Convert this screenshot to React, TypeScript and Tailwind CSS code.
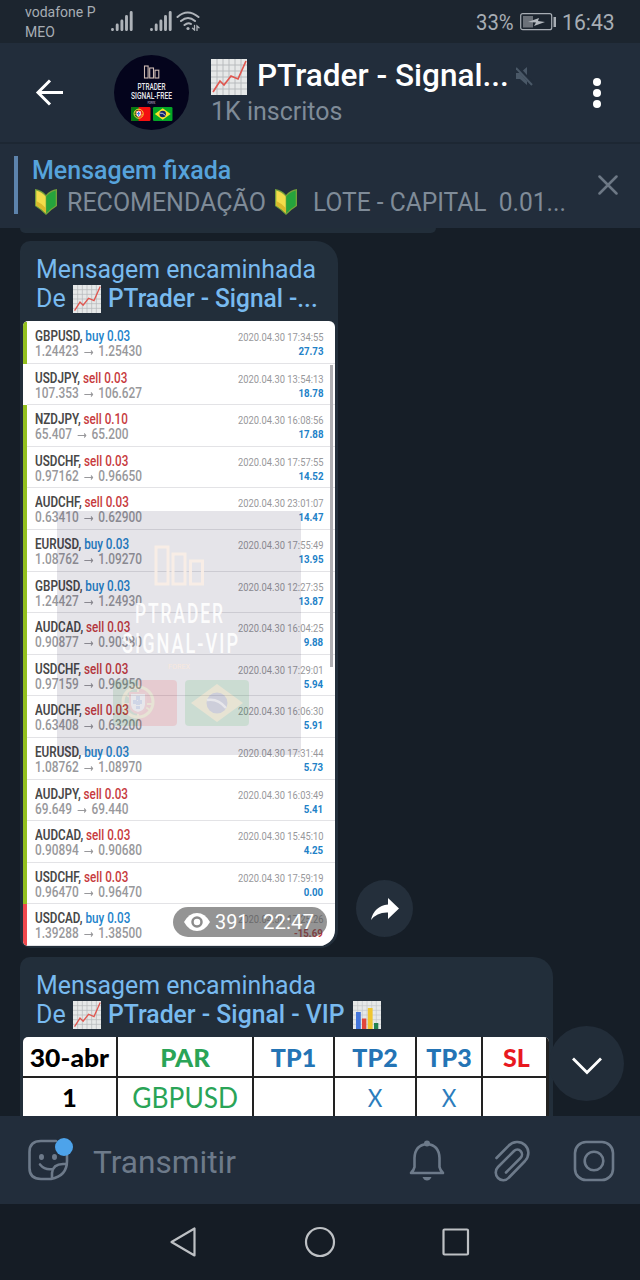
import React from "react";

type Trade = [string, "buy" | "sell", string, string, string, string, string, "g" | "w" | "r"];

const trades: Trade[] = [
  ["GBPUSD", "buy", "0.03", "1.24423", "1.25430", "2020.04.30 17:34:55", "27.73", "g"],
  ["USDJPY", "sell", "0.03", "107.353", "106.627", "2020.04.30 13:54:13", "18.78", "w"],
  ["NZDJPY", "sell", "0.10", "65.407", "65.200", "2020.04.30 16:08:56", "17.88", "g"],
  ["USDCHF", "sell", "0.03", "0.97162", "0.96650", "2020.04.30 17:57:55", "14.52", "g"],
  ["AUDCHF", "sell", "0.03", "0.63410", "0.62900", "2020.04.30 23:01:07", "14.47", "g"],
  ["EURUSD", "buy", "0.03", "1.08762", "1.09270", "2020.04.30 17:55:49", "13.95", "g"],
  ["GBPUSD", "buy", "0.03", "1.24427", "1.24930", "2020.04.30 12:27:35", "13.87", "g"],
  ["AUDCAD", "sell", "0.03", "0.90877", "0.90380", "2020.04.30 16:04:25", "9.88", "g"],
  ["USDCHF", "sell", "0.03", "0.97159", "0.96950", "2020.04.30 17:29:01", "5.94", "g"],
  ["AUDCHF", "sell", "0.03", "0.63408", "0.63200", "2020.04.30 16:06:30", "5.91", "g"],
  ["EURUSD", "buy", "0.03", "1.08762", "1.08970", "2020.04.30 17:31:44", "5.73", "g"],
  ["AUDJPY", "sell", "0.03", "69.649", "69.440", "2020.04.30 16:03:49", "5.41", "g"],
  ["AUDCAD", "sell", "0.03", "0.90894", "0.90680", "2020.04.30 15:45:10", "4.25", "g"],
  ["USDCHF", "sell", "0.03", "0.96470", "0.96470", "2020.04.30 17:59:19", "0.00", "g"],
  ["USDCAD", "buy", "0.03", "1.39288", "1.38500", "2020.04.30 17:25:26", "-15.69", "r"],
];

const barColor = { g: "bg-[#93c01f]", w: "bg-white", r: "bg-[#f0484d]" };

function ChartUp({ className }: { className: string }) {
  return (
    <svg viewBox="0 0 36 36" className={className}>
      <rect width="36" height="36" fill="#e6e8e8" />
      <path d="M6 0V36M12 0V36M18 0V36M24 0V36M30 0V36M0 6H36M0 12H36M0 18H36M0 24H36M0 30H36" stroke="#b4b8ba" strokeWidth=".9" />
      <path d="M2 33L9 22L13 26L20 17L27 20L35 2" fill="none" stroke="#e0564f" strokeWidth="1.7" />
    </svg>
  );
}

function ChartBars({ className }: { className: string }) {
  return (
    <svg viewBox="0 0 28 28" className={className}>
      <rect width="28" height="28" fill="#e6e8e8" />
      <path d="M4.7 0V28M9.3 0V28M14 0V28M18.7 0V28M23.3 0V28M0 4.7H28M0 9.3H28M0 14H28M0 18.7H28M0 23.3H28" stroke="#c3c6c8" strokeWidth=".7" />
      <rect x="3" y="11" width="4.8" height="17" fill="#4476dc" />
      <rect x="9" y="17.5" width="4.3" height="10.5" fill="#e1463a" />
      <rect x="14.8" y="7" width="4.8" height="21" fill="#efc52e" />
      <rect x="21" y="22" width="4.3" height="6" fill="#238150" />
    </svg>
  );
}

function Leaf({ className }: { className: string }) {
  return (
    <svg viewBox="0 0 22 27" className={className}>
      <path d="M0 1Q7 2 11 7Q15 2 22 1V18Q17 21 11 27Q5 21 0 18Z" fill="#74a13a" />
      <path d="M1.3 2.6Q7 4 10.7 8.6V25Q6 20 1.3 17.4Z" fill="#f2dc4a" />
      <path d="M20.7 2.6Q15 4 11.3 8.6V25Q16 20 20.7 17.4Z" fill="#25a43c" />
      <path d="M1.3 13Q6 15 10.7 20V25Q6 20 1.3 17.4Z" fill="#d9b92c" />
    </svg>
  );
}

function Flags() {
  return (
    <>
      <rect x="0" y="0" width="64" height="46" rx="4" fill="#f41010" />
      <path d="M4 0H25V46H4Q0 46 0 42V4Q0 0 4 0Z" fill="#067a12" />
      <circle cx="25" cy="22" r="15" fill="none" stroke="#f7e13a" strokeWidth="3" />
      <path d="M12 14L37 30M11 24H40M25 7V37" stroke="#f7e13a" strokeWidth="2" />
      <path d="M17 13H33V25Q32 32 25 33Q18 32 17 25Z" fill="#fff" stroke="#e22" strokeWidth="2" />
      <path d="M25 16V29M20 22H30" stroke="#2468d0" strokeWidth="4" strokeDasharray="4 1" />
      <rect x="72" y="0" width="64" height="46" rx="4" fill="#04a526" />
      <path d="M104 4L130 23L104 42L78 23Z" fill="#fbe329" />
      <circle cx="104" cy="23" r="10.5" fill="#15246d" />
      <path d="M94 20Q105 18 113 28" fill="none" stroke="#fff" strokeWidth="2.5" />
    </>
  );
}

function Avatar() {
  return (
    <svg viewBox="0 0 75 75" className="ml-[51px] h-[75px] w-[75px] shrink-0">
      <circle cx="37.5" cy="37.5" r="37.5" fill="#04041c" />
      <g fill="none" stroke="#cfbcb4" strokeWidth="1.1">
        <rect x="30.5" y="11" width="3.6" height="12" />
        <rect x="35.7" y="13" width="3.8" height="10" />
        <rect x="41" y="15.2" width="3.8" height="7.8" />
      </g>
      <g fill="#e8e8ee" textAnchor="middle" fontFamily="Roboto, sans-serif" fontWeight="500">
        <text x="37.5" y="34.8" fontSize="9" textLength="28" lengthAdjust="spacingAndGlyphs">PTRADER</text>
        <text x="37.5" y="43.8" fontSize="9" textLength="41" lengthAdjust="spacingAndGlyphs">SIGNAL-FREE</text>
        <text x="37.5" y="49" fontSize="3" fill="#8f86a0" textLength="8">FOREX</text>
      </g>
      <g transform="translate(17 52) scale(.305)"><Flags /></g>
    </svg>
  );
}

function Watermark() {
  return (
    <svg viewBox="0 0 244 244" className="absolute left-[34px] top-[190px] h-[244px] w-[244px]">
      <rect width="244" height="244" fill="#1b1340" opacity=".115" />
      <g fill="none" stroke="#fbefe6" strokeWidth="3" opacity=".9">
        <rect x="99" y="36" width="12" height="37" />
        <rect x="116" y="43" width="12" height="30" />
        <rect x="133.500" y="50" width="12" height="23" />
      </g>
      <g fill="#fff" textAnchor="middle" fontFamily="Roboto, sans-serif" opacity=".9">
        <g fontSize="27" fontWeight="500" letterSpacing="3">
          <text x="123" y="112" textLength="90" lengthAdjust="spacingAndGlyphs">PTRADER</text>
          <text x="124" y="142" textLength="118" lengthAdjust="spacingAndGlyphs">SIGNAL-VIP</text>
        </g>
        <text x="122" y="158" fontSize="8" fill="#fbeadd" textLength="22" lengthAdjust="spacingAndGlyphs">FOREX</text>
      </g>
      <g transform="translate(56 169)" opacity=".11"><Flags /></g>
    </svg>
  );
}

function Signal({ className }: { className: string }) {
  return (
    <svg viewBox="0 0 22 20" className={className} stroke="#aeb3b9" strokeWidth="2.9" strokeLinecap="round">
      <path d="M1.500 18.500V18.600M6.200 14V18.600M10.900 10V18.600M15.500 5.500V18.600M20.200 1.500V18.600" />
    </svg>
  );
}

function StatusBar() {
  return (
    <div className="flex h-[43px] bg-[#1c252f] text-[#a7adb4]">
      <div className="w-[86px] pl-[25px] pt-[2px] text-[14px] leading-[20px] whitespace-nowrap">
        <div className="origin-left">vodafone P</div>
        <div>MEO</div>
      </div>
      <Signal className="ml-[25px] mt-[11px] h-5 w-[22px]" />
      <Signal className="ml-[17px] mt-[11px] h-5 w-[22px]" />
      <svg viewBox="0 0 24 20" className="ml-1 mt-[11px] h-5 w-6" fill="none" stroke="#aeb3b9" strokeWidth="2" strokeLinecap="round">
        <path d="M1.500 6Q11.500 -3 22.500 6M5 10Q12 4 19 10M8.500 14Q12 11 15 13" />
        <circle cx="12" cy="17.500" r="1.600" fill="#aeb3b9" stroke="none" />
        <path d="M18.500 14.500V19L16.500 17.200M21 19.500V15L23 16.800" strokeWidth="1.300" />
      </svg>
      <div className="ml-auto flex pr-[24px] pt-[8px] text-[22.500px] leading-[29px]">
        <span className="-ml-px mr-px w-[44px] origin-left scale-x-[0.9]">33%</span>
        <svg viewBox="0 0 37 18" className="-ml-px mr-px mt-[5px] h-[18px] w-[37px]">
          <rect x=".7" y=".7" width="31" height="16" rx="2" fill="none" stroke="#a7adb4" strokeWidth="1.200" />
          <rect x="3" y="3" width="10" height="11.500" fill="#6b7179" />
          <path d="M8 9L19 5L18 8L25 9L14 13L16 9.500Z" fill="#b4b9bf" />
          <rect x="33.500" y="4" width="2.500" height="10" fill="#a7adb4" />
        </svg>
        <span className="ml-[4px] mr-[2px] w-[52px] origin-left scale-x-[0.94]">16:43</span>
      </div>
    </div>
  );
}

function Header() {
  return (
    <div className="flex h-[99px] items-center bg-[#222d3b] pl-[35px]">
      <svg viewBox="0 0 28 27" className="h-[27px] w-7 shrink-0" fill="none" stroke="#fff" strokeWidth="3">
        <path d="M28 13.500H3M15 1.500L3 13.500L15 25.500" />
      </svg>
      <Avatar />
      <div className="ml-[22px] w-[299px] whitespace-nowrap">
        <div className="flex h-[36px] items-center">
          <ChartUp className="h-9 w-9 shrink-0" />
          <span className="mb-[3px] ml-[10px] origin-left scale-x-[0.985] text-[32px] leading-[38px] font-medium text-white">PTrader - Signal...</span>
        </div>
        <div className="pt-[2px] text-[25px] leading-[30px] text-[#7f8b98]">1K inscritos</div>
      </div>
      <svg viewBox="0 0 18 20" className="mb-[32px] ml-[6px] h-5 w-[18px] shrink-0">
        <path d="M0 6H4L11 0V18L4 12H0Z" fill="#4a5867" />
        <path d="M2 1L17 18" stroke="#222d3b" strokeWidth="4" />
        <path d="M0 1L16 18" stroke="#4a5867" strokeWidth="2" />
      </svg>
      <div className="ml-[59px] flex flex-col gap-[3px]">
        <i className="h-2 w-2 rounded-full bg-white" />
        <i className="h-2 w-2 rounded-full bg-white" />
        <i className="h-2 w-2 rounded-full bg-white" />
      </div>
    </div>
  );
}

function Pinned() {
  return (
    <div className="flex h-[86px] border-t-2 border-[#1d2733] bg-[#222d3b] pl-[14px]">
      <div className="mt-[12px] h-[58px] w-[4px] bg-[#5d83ac]" />
      <div className="ml-[14px] mt-[10px] w-[540px] whitespace-nowrap">
        <div className="pt-px text-[25px] leading-[31px] font-medium text-[#56a3dc]">Mensagem fixada</div>
        <div className="flex h-[32px] items-center text-[25px] leading-8 text-[#7f8b98]">
          <Leaf className="mb-px ml-[3px] mr-[10px] h-[27px] w-[22px]" />
          <span className="mt-px w-[198px]">RECOMENDAÇÃO</span>
          <Leaf className="mb-px ml-[10px] mr-[16px] h-[27px] w-[22px]" />
          <span className="mt-px origin-left scale-x-[0.983] whitespace-pre">LOTE - CAPITAL  0.01...</span>
        </div>
      </div>
      <svg viewBox="0 0 20 20" className="ml-[26px] mt-[31px] h-5 w-5" stroke="#6d7885" strokeWidth="2.500" strokeLinecap="round">
        <path d="M1.500 1.500L18.500 18.500M18.500 1.500L1.500 18.500" />
      </svg>
    </div>
  );
}

function TradeRow({ t }: { t: Trade }) {
  const [pair, side, lot, from, to, date, profit, bar] = t;
  return (
    <div className="flex h-[41.600px] shrink-0">
      <div className={"w-[4px] shrink-0 " + barColor[bar]} />
      <div className="flex min-w-0 flex-1 justify-between border-b border-[#e3e3e6] pl-[8px] pr-[12px] whitespace-nowrap">
        <div className="w-[110px] pt-[7px] text-[14px] leading-[15px]">
          <div className="w-max origin-left scale-x-[0.835]">
            <span className="font-semibold text-[#484848]">{pair},</span>{" "}
            <span className={side === "buy" ? "font-medium text-[#2383cb]" : "font-medium text-[#c73a3d]"}>{side} {lot}</span>
          </div>
          <div className="flex w-max origin-left scale-x-[0.848] font-medium text-[#98989b]">
            <span>{from}</span>
            <svg viewBox="0 0 11 15" className="mx-[6px] h-[15px] w-[11px]" fill="none" stroke="#98989b" strokeWidth="1.200">
              <path d="M0 8.500H10M8 6.500L10 8.500L8 10.500" />
            </svg>
            <span>{to}</span>
          </div>
        </div>
        <div className="flex flex-col items-end pt-[8px]">
          <div className="origin-right scale-x-[0.85] text-[11px] leading-[15px] text-[#98989b]">{date}</div>
          <div className={"origin-right scale-x-[0.88] text-[11px] leading-[14px] font-bold " + (profit[0] === "-" ? "text-[#c22f33]" : "text-[#2181c7]")}>{profit}</div>
        </div>
      </div>
    </div>
  );
}

function Views() {
  return (
    <div className="absolute right-[8px] bottom-[9px] flex h-[30px] w-[154px] items-center rounded-full bg-[#4d4d4d]/60 pl-[11px] text-[20.500px] text-white">
      <svg viewBox="0 0 26 18" className="h-[18px] w-[26px]">
        <path d="M0 9Q5 0 13 0Q21 0 26 9Q21 18 13 18Q5 18 0 9Z" fill="#fff" />
        <circle cx="13" cy="9" r="4.500" fill="none" stroke="#8b8b8b" strokeWidth="2.500" />
      </svg>
      <span className="ml-[5px] w-[48px] origin-left scale-x-[0.97]">391</span>
      <span>22:47</span>
    </div>
  );
}

function Forwarded({ name, nameClass, children }: { name: string; nameClass: string; children?: React.ReactNode }) {
  return (
    <div className="h-[80px] pl-[16px] pt-[14px] text-[25px] leading-[29px] whitespace-nowrap text-[#78baef]">
      <div className="w-max origin-left scale-x-[0.995] pt-px leading-[28px]">Mensagem encaminhada</div>
      <div className="flex items-center">
        <span className="w-[37px]">De</span>
        <ChartUp className="h-7 w-7" />
        <span className={"ml-[7px] origin-left font-medium " + nameClass}>{name}</span>
        {children}
      </div>
    </div>
  );
}

function Cell({ className, children }: { className: string; children?: React.ReactNode }) {
  return <div className={"flex items-center justify-center border-r-2 border-b-2 border-[#222] " + className}>{children}</div>;
}

function ResultTable() {
  return (
    <div className="ml-[3px] grid w-[526px] grid-cols-[95px_136px_81px_82px_66px_66px] grid-rows-[41px_60px] overflow-hidden rounded-t-[5px] bg-white font-['Lato',sans-serif] text-[25px]">
      <Cell className="pt-[3px] font-black text-black"><span className="scale-x-[1.06]">30-abr</span></Cell>
      <Cell className="pt-[3px] font-black text-[#2aa457]"><span className="scale-x-[1.03]">PAR</span></Cell>
      <Cell className="pt-[3px] font-black text-[#2474b5]"><span className="scale-x-[1]">TP1</span></Cell>
      <Cell className="pt-[3px] font-black text-[#2474b5]"><span className="scale-x-[1]">TP2</span></Cell>
      <Cell className="pt-[3px] font-black text-[#2474b5]"><span className="scale-x-[1]">TP3</span></Cell>
      <Cell className="border-r-[3px] pt-[3px] pl-[4px] font-black text-[#e8191f]"><span className="scale-x-[1]">SL</span></Cell>
      <Cell className="pb-[18px] font-black text-black">1</Cell>
      <Cell className="pb-[20px] text-[28px] text-[#2aa457]"><span className="scale-x-[0.94]">GBPUSD</span></Cell>
      <Cell className="pb-[20px]" />
      <Cell className="pb-[18px] text-[#2c7dbd]"><span className="scale-x-[0.9]">X</span></Cell>
      <Cell className="pb-[18px] text-[#2c7dbd]"><span className="scale-x-[0.9]">X</span></Cell>
      <Cell className="border-r-[3px]" />
    </div>
  );
}

function Composer() {
  return (
    <div className="flex h-[88px] items-center bg-[#222d3b] pl-[27px]">
      <svg viewBox="0 0 48 48" className="h-12 w-12" fill="none" stroke="#6d7a8a" strokeWidth="2.600" strokeLinecap="round">
        <path d="M29 5H14Q2.500 5 2.500 16V32Q2.500 43 14 43H24Q40 40 40 25V18" />
        <path d="M25 42V37Q26 28 36 28H39M13 28.500Q18 34.500 26 33" />
        <ellipse cx="14.500" cy="21" rx="1.500" ry="2" fill="#6d7a8a" strokeWidth="2" />
        <ellipse cx="27.500" cy="21" rx="1.500" ry="2" fill="#6d7a8a" strokeWidth="2" />
        <circle cx="37" cy="11" r="9" fill="#4da3ea" stroke="none" />
      </svg>
      <span className="ml-[18px] mt-[5px] origin-left scale-x-[1.02] text-[31px] leading-10 text-[#6d7a8a]">Transmitir</span>
      <div className="ml-auto flex items-center pt-[2px] pr-[25px]">
        <svg viewBox="0 0 36 42" className="h-[42px] w-9" fill="none" stroke="#6d7a8a" strokeWidth="2.600" strokeLinejoin="round">
          <path d="M18 4Q30 5 30.500 18V27Q31 30 34 33H2Q5 30 5.500 27V18Q6 5 18 4Z" />
          <circle cx="18" cy="3.500" r="3" fill="#6d7a8a" stroke="none" />
          <path d="M13.500 37H22.500Q21 40.500 18 40.500Q15 40.500 13.500 37Z" fill="#6d7a8a" stroke="none" />
        </svg>
        <svg viewBox="0 0 36 42" className="ml-[49px] h-[42px] w-9" fill="none" stroke="#6d7a8a" strokeWidth="2.600" strokeLinecap="round">
          <path d="M2.500 18L14.500 5.800C19 1 26.500.6 31 5C35.500 9.400 35.500 16 31 21L15 37.500C12 41 7 41 4 38C1 35 1 30 4 27L20 11C22 9 25 9 26.500 11C28.500 13 28.500 16 26.500 18L12 32.500" />
        </svg>
        <svg viewBox="0 0 42 42" className="ml-[43px] h-[42px] w-[42px]" fill="none" stroke="#6d7a8a" strokeWidth="2.600">
          <rect x="2" y="2" width="38" height="38" rx="11" />
          <circle cx="21" cy="21" r="9.300" />
        </svg>
      </div>
    </div>
  );
}

function NavBar() {
  return (
    <div className="flex h-[76px] items-center bg-[#151c25] pl-[169px]">
      <svg viewBox="0 0 302 32" className="h-8 w-[302px]" fill="none" stroke="#bdc0c4" strokeWidth="2.200" strokeLinejoin="round">
        <path d="M25.500 2.500V29.500L2.500 16Z" />
        <circle cx="151" cy="16" r="14" />
        <rect x="274.500" y="3.500" width="24.500" height="25" rx="1" />
      </svg>
    </div>
  );
}

export default function App() {
  return (
    <div className="h-[1280px] w-[640px] overflow-hidden bg-[#161e27] font-['Roboto',sans-serif]">
      <StatusBar />
      <Header />
      <Pinned />
      <main className="relative h-[888px] overflow-hidden pl-[20px]">
        <div className="h-[5px] w-[416px] rounded-b-[10px] bg-[#222e3a]" />
        <div className="mt-[8px] flex items-end">
          <section className="h-[707px] w-[318px] rounded-[10px] rounded-tr-[22px] rounded-br-[18px] bg-[#222e3a]">
            <Forwarded name="PTrader - Signal -..." nameClass="scale-x-[0.978]" />
            <div className="relative ml-[3px] flex h-[625px] w-[312px] flex-col overflow-hidden rounded-[5px] rounded-tr-[6px] rounded-br-[16px] bg-white pt-px">
              {trades.map((t, i) => <TradeRow key={i} t={t} />)}
              <Watermark />
              <div className="absolute right-[2px] top-[44px] h-[302px] w-[3px] bg-[#afafb3]" />
              <Views />
            </div>
          </section>
          <div className="mb-[11px] ml-[18px] flex h-[57px] w-[57px] items-center justify-center rounded-full bg-[#242f3b]">
            <svg viewBox="0 0 28 22" className="h-[22px] w-7">
              <path d="M17 0L28 10.500L17 21V14.500Q6 14 0 22Q3 8 17 6.500Z" fill="#fff" />
            </svg>
          </div>
        </div>
        <section className="mt-[9px] h-[180px] w-[533px] rounded-t-[10px] rounded-tr-[20px] bg-[#222e3a]">
          <Forwarded name="PTrader - Signal - VIP" nameClass="scale-x-[0.99]">
            <ChartBars className="ml-[6px] h-7 w-7" />
          </Forwarded>
          <ResultTable />
        </section>
        <div className="absolute right-[16px] bottom-[15px] flex h-[75px] w-[75px] items-center justify-center rounded-full bg-[#222d39]">
          <svg viewBox="0 0 30 18" className="mt-[4px] h-[18px] w-[30px]" fill="none" stroke="#fff" strokeWidth="2.800">
            <path d="M1 1.500L15 15.500L29 1.500" />
          </svg>
        </div>
      </main>
      <Composer />
      <NavBar />
    </div>
  );
}
